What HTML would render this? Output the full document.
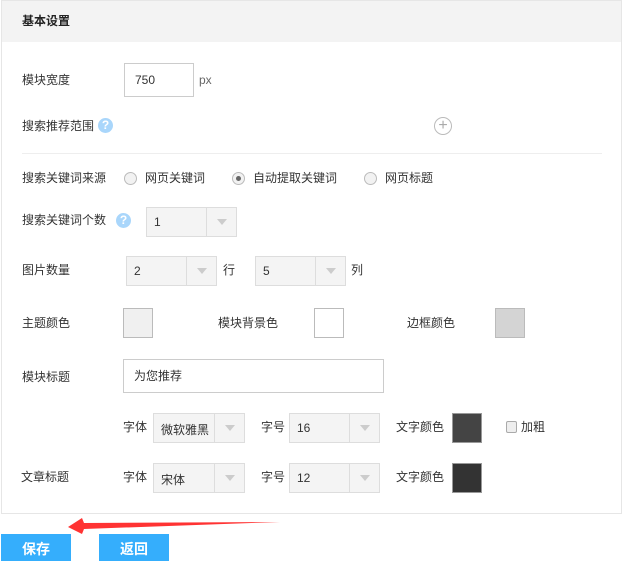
<!DOCTYPE html>
<html><head><meta charset="utf-8"><style>
body{margin:0;width:623px;height:561px;background:#fff;font-family:"Liberation Sans","Noto Sans CJK SC",sans-serif;font-size:12px;color:#333;position:relative;overflow:hidden}
.a{position:absolute}
.t{position:absolute;line-height:14px;white-space:nowrap}
.panel{left:1px;top:0;width:619px;height:512px;border:1px solid #e6e6e6}
.hd{left:2px;top:1px;width:619px;height:41px;background:#f3f3f3}
.in{position:absolute;border:1px solid #ccc;background:#fff;box-sizing:border-box;padding-left:10px;font-size:12px}
.sel{position:absolute;border:1px solid #ddd;background:#f4f4f4;box-sizing:border-box;height:30px}
.sel span{position:absolute;left:7px;top:7px}
.sel i{position:absolute;right:0;top:0;width:29px;height:28px;border-left:1px solid #ddd}
.sel i:after{content:"";position:absolute;left:10px;top:11px;border:5px solid transparent;border-top:6px solid #ccc}
.sw{position:absolute;width:30px;height:30px;box-sizing:border-box;border:1px solid #bbb}
.rd{position:absolute;width:11px;height:11px;border:1px solid #bbb;border-radius:50%;background:#f2f2f2}
.help{position:absolute;width:15px;height:15px;border-radius:50%;background:#a9d6fb;color:#fff;font-weight:bold;font-size:12px;text-align:center;line-height:15px}
.btn{position:absolute;top:534px;width:70px;height:27px;background:#35aefc;color:#fff;font-weight:bold;font-size:14px;text-align:center;line-height:30px}
</style></head><body>
<div class="a panel"></div>
<div class="a hd"></div>
<div class="t" style="left:22px;top:14px;font-weight:bold;color:#222">基本设置</div>

<div class="t" style="left:22px;top:73px">模块宽度</div>
<div class="in" style="left:124px;top:63px;width:70px;height:34px;line-height:32px">750</div>
<div class="t" style="left:199px;top:73px;color:#666">px</div>

<div class="t" style="left:22px;top:119px">搜索推荐范围</div>
<div class="help" style="left:98px;top:118px">?</div>
<div class="a" style="left:434px;top:117px;width:16px;height:16px;border:1px solid #bbb;border-radius:50%;color:#aaa;text-align:center;line-height:16px;font-size:16px">+</div>
<div class="a" style="left:22px;top:153px;width:580px;height:1px;background:#eee"></div>

<div class="t" style="left:22px;top:171px">搜索关键词来源</div>
<div class="rd" style="left:124px;top:172px"></div><div class="t" style="left:145px;top:171px">网页关键词</div>
<div class="rd" style="left:232px;top:172px"><div class="a" style="left:3px;top:3px;width:5px;height:5px;border-radius:50%;background:#666"></div></div><div class="t" style="left:253px;top:171px">自动提取关键词</div>
<div class="rd" style="left:364px;top:172px"></div><div class="t" style="left:385px;top:171px">网页标题</div>

<div class="t" style="left:22px;top:213px">搜索关键词个数</div>
<div class="help" style="left:116px;top:213px">?</div>
<div class="sel" style="left:146px;top:207px;width:91px"><span>1</span><i></i></div>

<div class="t" style="left:22px;top:263px">图片数量</div>
<div class="sel" style="left:126px;top:256px;width:91px"><span>2</span><i></i></div>
<div class="t" style="left:223px;top:263px">行</div>
<div class="sel" style="left:255px;top:256px;width:91px"><span>5</span><i></i></div>
<div class="t" style="left:351px;top:263px">列</div>

<div class="t" style="left:22px;top:316px">主题颜色</div>
<div class="sw" style="left:123px;top:308px;background:#f0f0f0"></div>
<div class="t" style="left:218px;top:316px">模块背景色</div>
<div class="sw" style="left:314px;top:308px;background:#fff"></div>
<div class="t" style="left:407px;top:316px">边框颜色</div>
<div class="sw" style="left:495px;top:308px;background:#d4d4d4"></div>

<div class="t" style="left:22px;top:370px">模块标题</div>
<div class="in" style="left:123px;top:359px;width:261px;height:34px;line-height:32px">为您推荐</div>

<div class="t" style="left:123px;top:420px">字体</div>
<div class="sel" style="left:153px;top:413px;width:92px"><span>微软雅黑</span><i></i></div>
<div class="t" style="left:261px;top:420px">字号</div>
<div class="sel" style="left:289px;top:413px;width:91px"><span>16</span><i></i></div>
<div class="t" style="left:396px;top:420px">文字颜色</div>
<div class="sw" style="left:452px;top:413px;background:#444;border-color:#999"></div>
<div class="a" style="left:506px;top:421px;width:9px;height:10px;border:1px solid #aaa;border-radius:2px;background:#eee"></div>
<div class="t" style="left:521px;top:420px">加粗</div>

<div class="t" style="left:21px;top:470px">文章标题</div>
<div class="t" style="left:123px;top:470px">字体</div>
<div class="sel" style="left:153px;top:463px;width:92px"><span>宋体</span><i></i></div>
<div class="t" style="left:261px;top:470px">字号</div>
<div class="sel" style="left:289px;top:463px;width:91px"><span>12</span><i></i></div>
<div class="t" style="left:396px;top:470px">文字颜色</div>
<div class="sw" style="left:452px;top:463px;background:#333;border-color:#999"></div>

<svg class="a" style="left:0;top:510px" width="300" height="30"><polygon points="68,17 82,8 84,13 280,12 84,19 82,24" fill="#f33"/></svg>

<div class="btn" style="left:1px">保存</div>
<div class="btn" style="left:99px">返回</div>
</body></html>
